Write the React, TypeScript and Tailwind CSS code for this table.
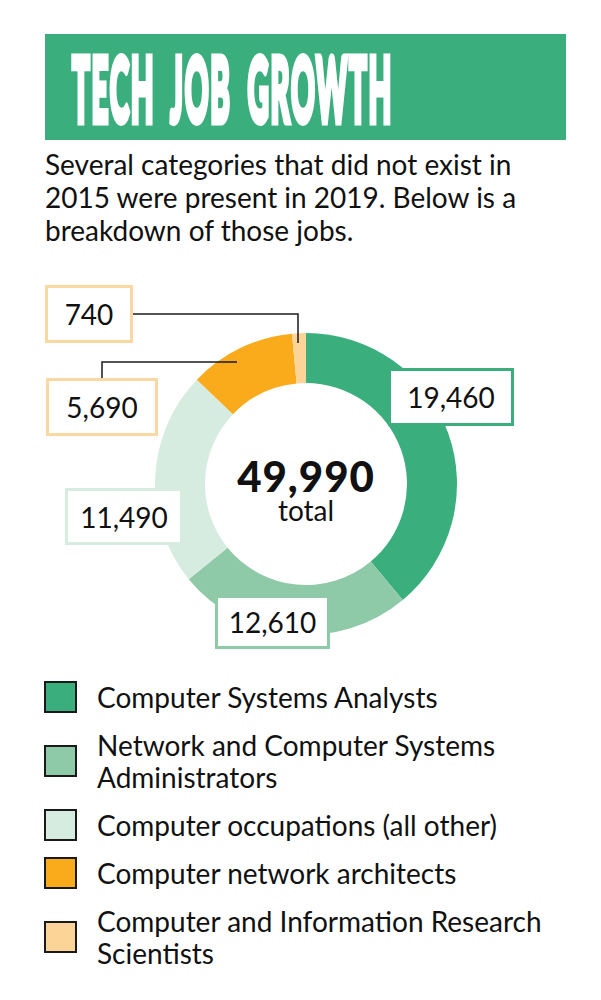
import { useLayoutEffect, useRef, useState } from "react"

const segments = [
    { value: 19460, color: "#3aae7c" },
    { value: 12610, color: "#8fcaa8" },
    { value: 11490, color: "#d6ece0" },
    { value: 5690, color: "#f9ab1c" },
    { value: 740, color: "#fdd498" },
]

const legend = [
    { color: "#3aae7c", lines: ["Computer Systems Analysts"] },
    { color: "#8fcaa8", lines: ["Network and Computer Systems", "Administrators"] },
    { color: "#d6ece0", lines: ["Computer occupations (all other)"] },
    { color: "#f9ab1c", lines: ["Computer network architects"] },
    { color: "#fdd498", lines: ["Computer and Information Research", "Scientists"] },
]

// angles in degrees, 0 = twelve o'clock, clockwise
const arcPath = (cx: number, cy: number, R: number, r: number, a0: number, a1: number) => {
    const pt = (rad: number, a: number) => {
        const t = (a * Math.PI) / 180
        return `${cx + rad * Math.sin(t)} ${cy - rad * Math.cos(t)}`
    }
    const large = a1 - a0 > 180 ? 1 : 0
    return `M ${pt(R, a0)} A ${R} ${R} 0 ${large} 1 ${pt(R, a1)} L ${pt(r, a1)} A ${r} ${r} 0 ${large} 0 ${pt(r, a0)} Z`
}

const Title = () => {
    const ref = useRef<HTMLSpanElement>(null)
    const [scale, setScale] = useState(0.33)

    // squeeze the heading into the condensed width of the original
    useLayoutEffect(() => {
        if (ref.current) setScale(321 / ref.current.offsetWidth)
    }, [])

    return (
        <div className="h-[106px] bg-[#3aae7c] flex items-center pl-[27px]">
            <div className="w-[321px] h-[90px] flex items-center">
                <span
                    ref={ref}
                    className="inline-block origin-left whitespace-nowrap text-white font-black text-[90px] leading-none tracking-[5px] [word-spacing:22px] [-webkit-text-stroke:7px_white]"
                    style={{ transform: `scaleX(${scale})` }}
                >
                    TECH JOB GROWTH
                </span>
            </div>
        </div>
    )
}

const Label = ({ text, className }: { text: string; className: string }) => (
    <div className={`absolute bg-white border-[3px] flex items-center justify-center text-[28px] leading-none text-[#111] ${className}`}>
        {text}
    </div>
)

const Donut = () => {
    const total = segments.reduce((s, x) => s + x.value, 0)
    let acc = 0
    return (
        <div className="relative h-[434px]">
            <svg width="601" height="434" className="absolute inset-0">
                {segments.map((seg, i) => {
                    const a0 = (acc / total) * 360
                    acc += seg.value
                    const a1 = (acc / total) * 360
                    return <path key={i} d={arcPath(306, 237, 151, 101, a0, a1)} fill={seg.color} />
                })}
                <polyline points="132,67 298,67 298,96" fill="none" stroke="#1a1a1a" strokeWidth="1.5" />
                <polyline points="102,131 102,115 237,115" fill="none" stroke="#1a1a1a" strokeWidth="1.5" />
            </svg>

            <Label text="740" className="left-[45px] top-[38px] w-[88px] h-[58px] border-[#f9d8a3]" />
            <Label text="5,690" className="left-[46px] top-[131px] w-[112px] h-[58px] border-[#f9d8a3]" />
            <Label text="19,460" className="left-[388px] top-[121px] w-[126px] h-[58px] border-[#3aae7c]" />
            <Label text="11,490" className="left-[65px] top-[241px] w-[118px] h-[57px] border-[#d6ece0]" />
            <Label text="12,610" className="left-[215px] top-[348px] w-[115px] h-[54px] border-[#8fcaa8]" />

            <div className="absolute left-[206px] top-[210px] w-[200px] flex flex-col items-center text-[#111]">
                <span className="text-[42px] font-black leading-[39px] tracking-[1px]">49,990</span>
                <span className="text-[28px] leading-none">total</span>
            </div>
        </div>
    )
}

export default function App() {
    return (
        <div className="w-[601px] h-[1000px] bg-white overflow-hidden font-['Lato','Liberation_Sans',sans-serif] text-[#111]">
            <div className="pl-[45px] pr-[35px] pt-[34px]">
                <Title />
                <p className="mt-[8px] text-[28px] leading-[33px]">
                    Several categories that did not exist in
                    <br />
                    2015 were present in 2019. Below is a
                    <br />
                    breakdown of those jobs.
                </p>
            </div>

            <Donut />

            <div className="px-[44px] flex flex-col gap-[16px]">
                {legend.map((item, i) => (
                    <div key={i} className="flex items-center gap-[20px]">
                        <div className="w-[33px] h-[32px] shrink-0 border-2 border-[#1a1a1a]" style={{ backgroundColor: item.color }} />
                        <div className="text-[28px] leading-[32px]">
                            {item.lines.map((l, j) => (
                                <div key={j}>{l}</div>
                            ))}
                        </div>
                    </div>
                ))}
            </div>
        </div>
    )
}
